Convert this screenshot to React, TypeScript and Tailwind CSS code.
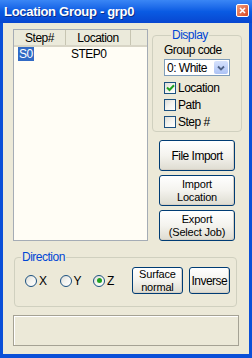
import React, { useState } from 'react';

const font = { fontFamily: '"Liberation Sans", Arial, sans-serif' };

function XpButton({ children, className }: { children: React.ReactNode; className: string }) {
  return (
    <button
      className={`flex flex-col items-center justify-center rounded-[3px] border border-[#003c74] bg-gradient-to-b from-[#ffffff] via-[#f4f3ee] to-[#dedcd1] text-black shadow-[inset_-1px_-1px_0_#d6d0c5] ${className}`}
    >
      {children}
    </button>
  );
}

function Check({ label, checked }: { label: string; checked?: boolean }) {
  return (
    <div className="flex h-[17px] items-center">
      <div className="flex h-[12px] w-[12px] items-center justify-center border border-[#1c5180] bg-gradient-to-br from-[#dcdcd7] via-[#f4f4f0] to-[#ffffff]">
        {checked && (
          <svg width="9" height="8" viewBox="0 0 9 8">
            <path d="M1 3.5 L3.5 6 L8 1.2" stroke="#21a121" strokeWidth="2" fill="none" />
          </svg>
        )}
      </div>
      <span className="ml-[2px] text-[12px] tracking-[-0.5px] text-black">{label}</span>
    </div>
  );
}

function Radio({ label, checked }: { label: string; checked?: boolean }) {
  return (
    <div className="flex items-center">
      <div className="flex h-[12px] w-[12px] items-center justify-center rounded-full border border-[#1c5180] bg-gradient-to-br from-[#dcdcd7] via-[#f4f4f0] to-[#ffffff]">
        {checked && <div className="h-[5px] w-[5px] rounded-full bg-[#21a121]" />}
      </div>
      <span className="ml-[2px] text-[12px] tracking-[-0.5px] text-black">{label}</span>
    </div>
  );
}

export default function App() {
  const [group] = useState('0: White');

  return (
    <div className="flex h-[358px] w-[252px] flex-col bg-[#0a4fd8] select-none" style={font}>
      {/* Title bar */}
      <div className="relative flex h-[23px] items-center bg-gradient-to-b from-[#3a86f5] via-[#0a5be3] to-[#0846d0] pl-[4px]">
        <span className="text-[13px] font-bold tracking-[-0.3px] text-white [text-shadow:1px_1px_0_#0b2e8a]">
          Location Group - grp0
        </span>
        <div className="absolute right-[3px] top-[4px] flex h-[13px] w-[13px] items-center justify-center rounded-[2px] border border-white bg-gradient-to-br from-[#f09b7c] to-[#d8441c]">
          <svg width="7" height="7" viewBox="0 0 7 7">
            <path d="M1 1 L6 6 M6 1 L1 6" stroke="white" strokeWidth="1.6" />
          </svg>
        </div>
      </div>

      {/* Body */}
      <div className="mx-[3px] mb-[4px] flex flex-1 flex-col bg-[#ece9d8] pl-[10px] pt-[6px]">
        <div className="flex">
          {/* List */}
          <div className="h-[212px] w-[135px] border border-[#a5acb5] bg-[#fffdf5]">
            <div className="flex h-[17px] border-b-2 border-[#d8d5c6] bg-[#ebeadb] text-[12px] tracking-[-0.5px] text-black">
              <div className="flex w-[52px] items-center justify-center border-r border-[#c7c5b2]">Step#</div>
              <div className="flex w-[65px] items-center justify-center border-r border-[#c7c5b2]">Location</div>
            </div>
            <div className="flex h-[13px] items-center text-[12px] tracking-[-0.5px]">
              <div className="w-[52px] pl-[4px]">
                <span className="bg-[#316ac5] px-[1px] text-white">S0</span>
              </div>
              <div className="pl-[5px] text-black">STEP0</div>
            </div>
          </div>

          {/* Right column */}
          <div className="ml-[4px] flex w-[90px] flex-col">
            <fieldset className="h-[103px] rounded-[4px] border border-[#d0d0bf] px-[11px] pt-[2px]">
              <legend className="ml-[7px] px-[1px] text-[12px] leading-[12px] tracking-[-0.5px] text-[#0046d5]">
                Display
              </legend>
              <div className="text-[12px] leading-[14px] tracking-[-0.5px] text-black">Group code</div>
              <div className="mt-[2px] flex h-[17px] w-[66px] items-center border border-[#7f9db9] bg-white">
                <span className="flex-1 pl-[2px] text-[12px] tracking-[-0.5px] text-black">{group}</span>
                <div className="m-[1px] flex h-[13px] w-[14px] items-center justify-center rounded-[2px] bg-gradient-to-b from-[#d6e2fc] to-[#adc3f5]">
                  <svg width="8" height="6" viewBox="0 0 8 6">
                    <path d="M1 1.5 L4 4.5 L7 1.5" stroke="#4d6185" strokeWidth="1.8" fill="none" />
                  </svg>
                </div>
              </div>
              <div className="mt-[3px]">
                <Check label="Location" checked />
                <Check label="Path" />
                <Check label="Step #" />
              </div>
            </fieldset>
            <div className="ml-[7px] mt-[8px] flex flex-col gap-[4px]">
              <XpButton className="h-[31px] w-[76px] text-[12px] leading-[14px] tracking-[-0.5px]">File Import</XpButton>
              <XpButton className="h-[31px] w-[76px] text-[11px] leading-[13px] tracking-[-0.2px]">
                <span>Import</span>
                <span>Location</span>
              </XpButton>
              <XpButton className="h-[31px] w-[76px] text-[11px] leading-[13px] tracking-[-0.2px]">
                <span>Export</span>
                <span>(Select Job)</span>
              </XpButton>
            </div>
          </div>
        </div>

        {/* Direction */}
        <fieldset className="ml-[1px] mt-[10px] h-[56px] w-[223px] rounded-[4px] border border-[#d0d0bf]">
          <legend className="ml-[6px] px-[1px] text-[12px] leading-[12px] tracking-[-0.5px] text-[#0046d5]">
            Direction
          </legend>
          <div className="mt-[4px] flex items-center pl-[10px]">
            <Radio label="X" />
            <div className="ml-[13px]">
              <Radio label="Y" />
            </div>
            <div className="ml-[12px]">
              <Radio label="Z" checked />
            </div>
            <XpButton className="ml-[18px] h-[27px] w-[51px] text-[11px] leading-[13px] tracking-[-0.2px]">
              <span>Surface</span>
              <span>normal</span>
            </XpButton>
            <XpButton className="ml-[6px] h-[27px] w-[41px] text-[12px] leading-[14px] tracking-[-0.5px]">Inverse</XpButton>
          </div>
        </fieldset>

        {/* Status */}
        <div className="mt-[8px] h-[31px] w-[226px] border border-[#a5a294] shadow-[inset_1px_1px_0_#ffffff]" />
      </div>
    </div>
  );
}
